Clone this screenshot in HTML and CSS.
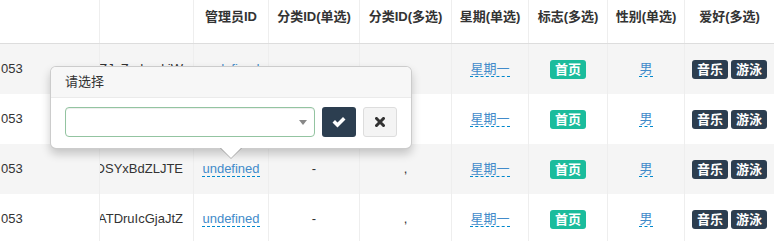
FILE: index.html
```html
<!DOCTYPE html>
<html lang="zh">
<head>
<meta charset="utf-8">
<title>表格</title>
<link rel="stylesheet" href="styles.css">
</head>
<body>
<div class="grid">
  <div class="row head">
    <div class="c"></div>
    <div class="c"></div>
    <div class="c">管理员ID</div>
    <div class="c">分类ID(单选)</div>
    <div class="c">分类ID(多选)</div>
    <div class="c">星期(单选)</div>
    <div class="c">标志(多选)</div>
    <div class="c">性别(单选)</div>
    <div class="c">爱好(多选)</div>
  </div>

  <div class="row brow odd">
    <div class="c first">053</div>
    <div class="c code">wZJeZgdemkiW</div>
    <div class="c"><span class="ed">undefined</span></div>
    <div class="c">-</div>
    <div class="c">,</div>
    <div class="c"><span class="ed">星期一</span></div>
    <div class="c"><span class="lbl green">首页</span></div>
    <div class="c"><span class="ed">男</span></div>
    <div class="c"><span class="lbls"><span class="lbl navy">音乐</span><span class="lbl navy">游泳</span></span></div>
  </div>

  <div class="row brow">
    <div class="c first">053</div>
    <div class="c code">pQmXcVbNaRtY</div>
    <div class="c"><span class="ed">undefined</span></div>
    <div class="c">-</div>
    <div class="c">,</div>
    <div class="c"><span class="ed">星期一</span></div>
    <div class="c"><span class="lbl green">首页</span></div>
    <div class="c"><span class="ed">男</span></div>
    <div class="c"><span class="lbls"><span class="lbl navy">音乐</span><span class="lbl navy">游泳</span></span></div>
  </div>

  <div class="row brow odd">
    <div class="c first">053</div>
    <div class="c code">kDSYxBdZLJTE</div>
    <div class="c"><span class="ed">undefined</span></div>
    <div class="c">-</div>
    <div class="c">,</div>
    <div class="c"><span class="ed">星期一</span></div>
    <div class="c"><span class="lbl green">首页</span></div>
    <div class="c"><span class="ed">男</span></div>
    <div class="c"><span class="lbls"><span class="lbl navy">音乐</span><span class="lbl navy">游泳</span></span></div>
  </div>

  <div class="row brow">
    <div class="c first">053</div>
    <div class="c code">ATDruIcGjaJtZ</div>
    <div class="c"><span class="ed">undefined</span></div>
    <div class="c">-</div>
    <div class="c">,</div>
    <div class="c"><span class="ed">星期一</span></div>
    <div class="c"><span class="lbl green">首页</span></div>
    <div class="c"><span class="ed">男</span></div>
    <div class="c"><span class="lbls"><span class="lbl navy">音乐</span><span class="lbl navy">游泳</span></span></div>
  </div>
</div>

<div class="pop">
  <div class="pop-title">请选择</div>
  <div class="pop-body">
    <div class="sel"><span class="caret"></span></div>
    <div class="btn ok">
      <svg width="14" height="11" viewBox="0 0 14 11"><path d="M0.5 5.5 L3 3 L5.5 5.5 L11 0 L13.5 2.5 L5.5 10.5 Z" fill="#fff"/></svg>
    </div>
    <div class="btn cancel">
      <svg width="10" height="10" viewBox="0 0 10 10"><path d="M1.5 1.5 L8.5 8.5 M8.5 1.5 L1.5 8.5" stroke="#333" stroke-width="3" stroke-linecap="square"/></svg>
    </div>
  </div>
  <div class="arrow"></div>
</div>
</body>
</html>
```

FILE: styles.css
```css
* { box-sizing: border-box; }

body {
  margin: 0;
  font-family: "Liberation Sans", "Noto Sans CJK SC", sans-serif;
  font-size: 13px;
  color: #333;
  background: #fff;
  position: relative;
  overflow: hidden;
}

.grid { width: 774px; }

.row {
  display: grid;
  grid-template-columns: 100px 94px 75px 91px 92px 77px 79px 77px 89px;
}

.c {
  border-right: 1px solid #eee;
  overflow: hidden;
  white-space: nowrap;
}
.c:last-child { border-right: 0; }

.head {
  height: 44px;
  border-bottom: 1px solid #ddd;
}
.head .c {
  font-weight: bold;
  padding-top: 8px;
  line-height: 18px;
  text-align: center;
}

.brow { height: 50px; }
.brow.odd { background: #f5f5f5; }
.brow .c {
  display: flex;
  align-items: center;
  justify-content: center;
  line-height: 18px;
}
.brow .c.first {
  justify-content: flex-start;
  padding-left: 1px;
}
.brow .c.code {
  justify-content: flex-end;
  padding-right: 10px;
}

.ed {
  display: inline-block;
  color: #428bca;
  border-bottom: 1px dashed #0088cc;
  line-height: 15px;
}

.lbls { display: flex; gap: 3px; }
.lbl {
  display: inline-block;
  color: #fff;
  font-weight: bold;
  line-height: 19px;
  padding: 0 5px;
  border-radius: 3px;
}
.green { background: #1abc9c; padding: 0 4.5px; }
.navy { background: #2c3e50; }

.pop {
  position: absolute;
  left: 50px;
  top: 66px;
  width: 362px;
  background: #fff;
  border: 1px solid rgba(0, 0, 0, 0.2);
  border-radius: 6px;
  box-shadow: 0 5px 10px rgba(0, 0, 0, 0.2);
}
.pop-title {
  background: #f7f7f7;
  border-bottom: 1px solid #ebebeb;
  padding: 8px 14px;
  line-height: 14px;
  border-radius: 5px 5px 0 0;
}
.pop-body {
  padding: 9px 14px 11px;
  display: flex;
  gap: 7px;
}
.sel {
  width: 250px;
  height: 30px;
  border: 1px solid #93c4a1;
  border-radius: 4px;
  box-shadow: inset 0 1px 1px rgba(0, 0, 0, 0.075);
  position: relative;
  background: #fff;
}
.caret {
  position: absolute;
  right: 7px;
  top: 12px;
  width: 0;
  height: 0;
  border-left: 4px solid transparent;
  border-right: 4px solid transparent;
  border-top: 5px solid #888;
}
.btn {
  width: 34px;
  height: 30px;
  border-radius: 3px;
  display: flex;
  align-items: center;
  justify-content: center;
}
.ok { background: #2c3e50; }
.cancel { background: #f4f4f4; border: 1px solid #ddd; }

.arrow {
  position: absolute;
  left: 169px;
  bottom: -11px;
  width: 0;
  height: 0;
  border-left: 11px solid transparent;
  border-right: 11px solid transparent;
  border-top: 11px solid rgba(0, 0, 0, 0.25);
}
.arrow::after {
  content: "";
  position: absolute;
  left: -10px;
  top: -11px;
  border-left: 10px solid transparent;
  border-right: 10px solid transparent;
  border-top: 10px solid #fff;
}
```
